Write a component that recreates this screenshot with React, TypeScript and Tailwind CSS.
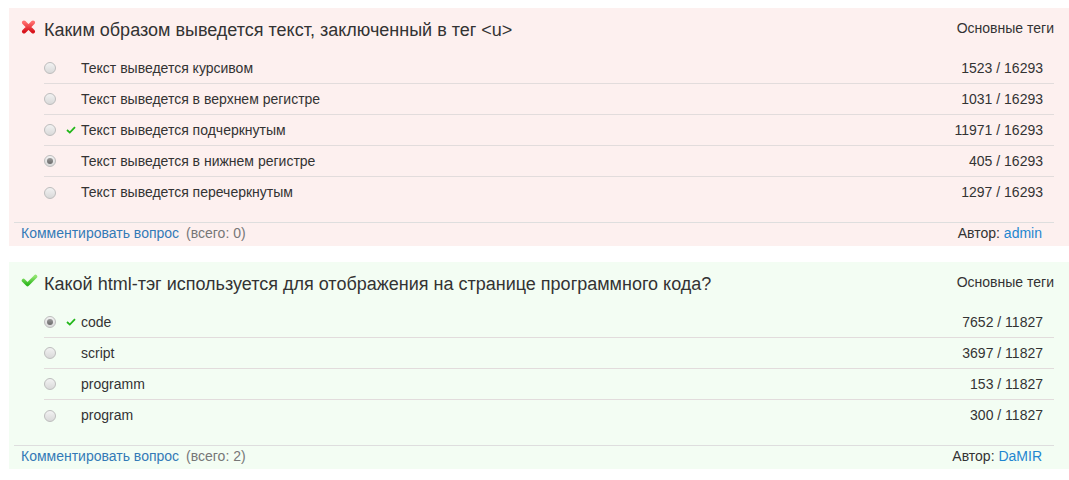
import React from "react";

type Row = { text: string; count: string; correct?: boolean; chosen?: boolean };
type Q = {
  ok: boolean;
  title: string;
  rows: Row[];
  comments: number;
  author: string;
};

const questions: Q[] = [
  {
    ok: false,
    title: "Каким образом выведется текст, заключенный в тег <u>",
    rows: [
      { text: "Текст выведется курсивом", count: "1523 / 16293" },
      { text: "Текст выведется в верхнем регистре", count: "1031 / 16293" },
      { text: "Текст выведется подчеркнутым", count: "11971 / 16293", correct: true },
      { text: "Текст выведется в нижнем регистре", count: "405 / 16293", chosen: true },
      { text: "Текст выведется перечеркнутым", count: "1297 / 16293" },
    ],
    comments: 0,
    author: "admin",
  },
  {
    ok: true,
    title: "Какой html-тэг используется для отображения на странице программного кода?",
    rows: [
      { text: "code", count: "7652 / 11827", correct: true, chosen: true },
      { text: "script", count: "3697 / 11827" },
      { text: "programm", count: "153 / 11827" },
      { text: "program", count: "300 / 11827" },
    ],
    comments: 2,
    author: "DaMIR",
  },
];

function CrossIcon() {
  return (
    <svg width="15" height="14" viewBox="0 0 15 14" className="shrink-0">
      <defs>
        <linearGradient id="rg" x1="0" y1="0" x2="0" y2="1">
          <stop offset="0" stopColor="#ff6b6b" />
          <stop offset="1" stopColor="#d8141c" />
        </linearGradient>
      </defs>
      <path d="M3 2.5 L12 11.5 M12 2.5 L3 11.5" stroke="url(#rg)" strokeWidth="4" strokeLinecap="round" />
    </svg>
  );
}

function CheckIcon() {
  return (
    <svg width="17" height="13" viewBox="0 0 17 13" className="shrink-0">
      <defs>
        <linearGradient id="gg" x1="0" y1="0" x2="0" y2="1">
          <stop offset="0" stopColor="#8fe46f" />
          <stop offset="1" stopColor="#2fb81e" />
        </linearGradient>
      </defs>
      <path d="M2.5 6.5 L6.5 10.5 L14.5 2.5" fill="none" stroke="url(#gg)" strokeWidth="3.6" strokeLinecap="round" strokeLinejoin="round" />
    </svg>
  );
}

function SmallCheck() {
  return (
    <svg width="10" height="8" viewBox="0 0 10 8">
      <path d="M1 4 L3.8 6.6 L9 1.2" fill="none" stroke="#22b71a" strokeWidth="1.8" />
    </svg>
  );
}

function Radio({ checked }: { checked?: boolean }) {
  return (
    <div className="w-[12px] h-[12px] rounded-full border border-[#bdbdbd] bg-gradient-to-b from-[#f2f2f2] to-[#d9d9d9] flex items-center justify-center shrink-0">
      {checked && <div className="w-[6px] h-[6px] rounded-full bg-gradient-to-b from-[#9a9a9a] to-[#6a6a6a]" />}
    </div>
  );
}

function Card({ q }: { q: Q }) {
  return (
    <div className={`${q.ok ? "bg-[#f3fdf3]" : "bg-[#fdf0ef]"} w-[1060px]`}>
      <div className="flex h-[45px] items-start pl-[12px] pr-[15px]">
        <div className="w-[23px] pt-[12px]">{q.ok ? <CheckIcon /> : <CrossIcon />}</div>
        <div className="flex-1 pt-[11px] text-[18px] leading-[22px] text-[#333]">{q.title}</div>
        <div className="pt-[10px] text-[14px] leading-[20px] text-[#333]">Основные теги</div>
      </div>
      <div className="ml-[35px] mr-[15px]">
        {q.rows.map((r, i) => (
          <div
            key={i}
            className={`flex items-center h-[31px] pr-[11px] text-[14px] text-[#333] ${i < q.rows.length - 1 ? "border-b border-[#e2dcdc]" : ""}`}
          >
            <Radio checked={r.chosen} />
            <div className="w-[25px] flex justify-center pl-[4px]">{r.correct && <SmallCheck />}</div>
            <div className="flex-1">{r.text}</div>
            <div>{r.count}</div>
          </div>
        ))}
      </div>
      <div className="mt-[14px] ml-[5px] mr-[15px] border-t border-[#dedede] flex items-start justify-between pl-[7px] pr-[12px] h-[24px] text-[14px] leading-[20px]">
        <div>
          <span className="text-[#337ab7]">Комментировать вопрос</span>
          <span className="text-[#777] ml-[7px]">(всего: {q.comments})</span>
        </div>
        <div className="text-[#333]">
          Автор: <span className="text-[#1f86d0]">{q.author}</span>
        </div>
      </div>
    </div>
  );
}

export default function App() {
  return (
    <div className="min-h-[480px] bg-white pl-[9px] pt-[8px] flex flex-col gap-[16px]" style={{ fontFamily: '"Liberation Sans", Arial, sans-serif' }}>
      {questions.map((q, i) => (
        <Card key={i} q={q} />
      ))}
    </div>
  );
}
